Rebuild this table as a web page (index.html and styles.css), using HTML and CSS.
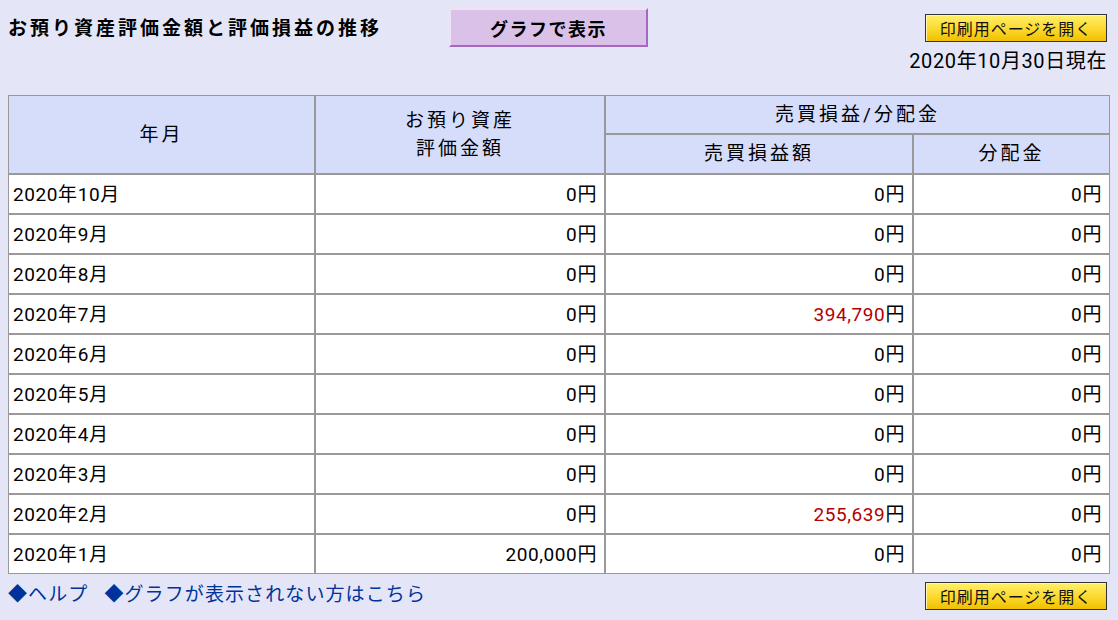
FILE: index.html
```html
<!DOCTYPE html>
<html lang="ja">
<head>
<meta charset="utf-8">
<link rel="stylesheet" href="styles.css">
</head>
<body>
<div class="page">
  <div class="top">
    <h1 class="title">お預り資産評価金額と評価損益の推移</h1>
    <button class="graph-btn">グラフで表示</button>
    <div class="top-right">
      <button class="print-btn">印刷用ページを開く</button>
      <div class="date">2020年10月30日現在</div>
    </div>
  </div>
  <table class="data">
    <colgroup>
      <col class="c1"><col class="c2"><col class="c3"><col class="c4">
    </colgroup>
    <thead>
      <tr>
        <th rowspan="2">年月</th>
        <th rowspan="2">お預り資産<br>評価金額</th>
        <th colspan="2" class="h1">売買損益/分配金</th>
      </tr>
      <tr>
        <th class="h2">売買損益額</th>
        <th class="h2">分配金</th>
      </tr>
    </thead>
    <tbody>
      <tr><td class="ym">2020年10月</td><td>0円</td><td>0円</td><td>0円</td></tr>
      <tr><td class="ym">2020年9月</td><td>0円</td><td>0円</td><td>0円</td></tr>
      <tr><td class="ym">2020年8月</td><td>0円</td><td>0円</td><td>0円</td></tr>
      <tr><td class="ym">2020年7月</td><td>0円</td><td><span class="pos">394,790</span>円</td><td>0円</td></tr>
      <tr><td class="ym">2020年6月</td><td>0円</td><td>0円</td><td>0円</td></tr>
      <tr><td class="ym">2020年5月</td><td>0円</td><td>0円</td><td>0円</td></tr>
      <tr><td class="ym">2020年4月</td><td>0円</td><td>0円</td><td>0円</td></tr>
      <tr><td class="ym">2020年3月</td><td>0円</td><td>0円</td><td>0円</td></tr>
      <tr><td class="ym">2020年2月</td><td>0円</td><td><span class="pos">255,639</span>円</td><td>0円</td></tr>
      <tr><td class="ym">2020年1月</td><td>200,000円</td><td>0円</td><td>0円</td></tr>
    </tbody>
  </table>
  <div class="bottom">
    <div class="links">
      <a class="link">◆ヘルプ</a>
      <a class="link">◆グラフが表示されない方はこちら</a>
    </div>
    <button class="print-btn">印刷用ページを開く</button>
  </div>
</div>
</body>
</html>
```
FILE: styles.css
```css
html, body {
  margin: 0;
  padding: 0;
  background: #e4e6f8;
}
body {
  font-family: "Roboto", "Noto Sans CJK JP", sans-serif;
  color: #000;
}
.page {
  padding: 0 8px 0 8px;
  width: 1102px;
}
.top {
  display: flex;
  align-items: flex-start;
  height: 95px;
}
.title {
  margin: 14px 0 0 0;
  font-family: "Noto Sans CJK JP", sans-serif;
  font-size: 19px;
  font-weight: bold;
  line-height: 26px;
  width: 441px;
  letter-spacing: 3px;
  white-space: nowrap;
}
.graph-btn {
  margin-top: 8px;
  width: 199px;
  height: 39px;
  background: #dac1e8;
  border: 2px solid;
  border-color: #efe2f6 #a468c4 #a468c4 #efe2f6;
  font-family: "Noto Sans CJK JP", sans-serif;
  font-size: 18px;
  font-weight: bold;
  letter-spacing: 1.5px;
  padding: 0;
  color: #000;
}
.top-right {
  margin-left: auto;
  display: flex;
  flex-direction: column;
  align-items: flex-end;
}
.print-btn {
  width: 182px;
  height: 28px;
  background: linear-gradient(#fff06a, #fcd82c 55%, #f0c000);
  border: 1px solid #333;
  box-shadow: inset 1px 1px 0 #fff6b0;
  font-family: "Noto Sans CJK JP", sans-serif;
  font-size: 16px;
  padding: 0;
  color: #111;
  letter-spacing: 1px;
}
.top-right .print-btn {
  margin-top: 14px;
  margin-right: 3px;
}
.date {
  margin-top: 8px;
  font-size: 20px;
  line-height: 22px;
  letter-spacing: 0.6px;
  margin-right: 3px;
}
table.data {
  border-collapse: separate;
  border-spacing: 0;
  width: 1102px;
  background: #fff;
  font-size: 19px;
}
col.c1 { width: 307px; }
col.c2 { width: 290px; }
col.c3 { width: 308px; }
col.c4 { width: 197px; }
table.data th, table.data td {
  border: 1px solid #999;
  padding: 0 6px;
  box-sizing: border-box;
}
table.data th {
  background: #d5ddfb;
  font-weight: normal;
  text-align: center;
  line-height: 28px;
  letter-spacing: 3px;
}
table.data th.h1 {
  height: 39px;
}
table.data th.h2 {
  height: 40px;
}
table.data td {
  text-align: right;
  height: 40px;
  padding: 0 7px 3px 4px;
  letter-spacing: 0.6px;
}
table.data td.ym {
  text-align: left;
}
.pos {
  color: #b30000;
}
.bottom {
  display: flex;
  justify-content: space-between;
  align-items: flex-start;
  margin-top: 8px;
}
.links {
  font-size: 19px;
  color: #003399;
  display: flex;
  gap: 16px;
  line-height: 26px;
  letter-spacing: 1.1px;
  margin-top: 0;
}
.link {
  color: #003399;
}
.bottom .print-btn {
  margin-right: 3px;
}
```
